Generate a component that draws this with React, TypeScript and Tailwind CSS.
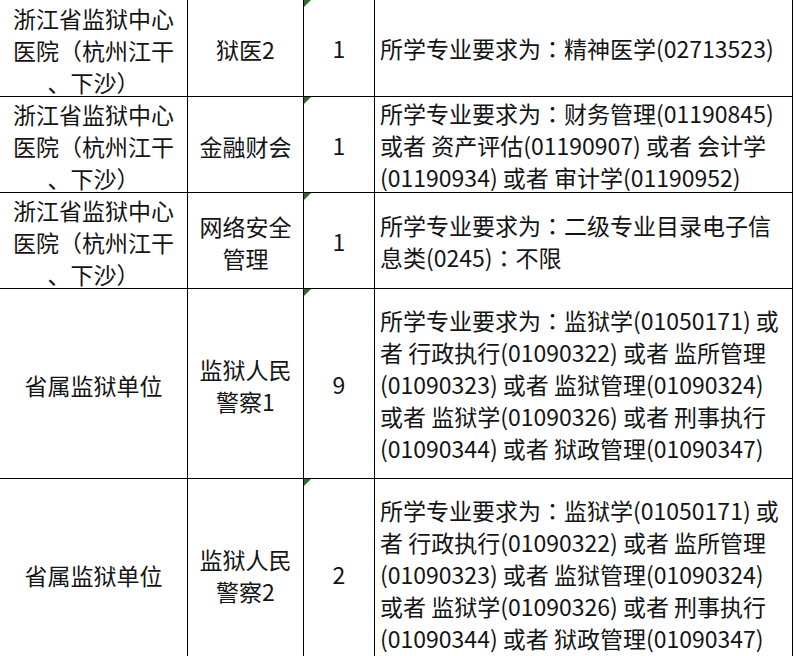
import React from "react";

type Row = {
  unit: string[];
  post: string[];
  count: string;
  major: string[];
  h: string;
};

const rows: Row[] = [
  {
    unit: ["浙江省监狱中心", "医院（杭州江干", "、下沙）"],
    post: ["狱医2"],
    count: "1",
    major: ["所学专业要求为：精神医学(02713523)"],
    h: "h-[97px]",
  },
  {
    unit: ["浙江省监狱中心", "医院（杭州江干", "、下沙）"],
    post: ["金融财会"],
    count: "1",
    major: [
      "所学专业要求为：财务管理(01190845)",
      "或者 资产评估(01190907) 或者 会计学",
      "(01190934) 或者 审计学(01190952)",
    ],
    h: "h-[96px]",
  },
  {
    unit: ["浙江省监狱中心", "医院（杭州江干", "、下沙）"],
    post: ["网络安全", "管理"],
    count: "1",
    major: ["所学专业要求为：二级专业目录电子信", "息类(0245)：不限"],
    h: "h-[96px]",
  },
  {
    unit: ["省属监狱单位"],
    post: ["监狱人民", "警察1"],
    count: "9",
    major: [
      "所学专业要求为：监狱学(01050171) 或",
      "者 行政执行(01090322) 或者 监所管理",
      "(01090323) 或者 监狱管理(01090324)",
      "或者 监狱学(01090326) 或者 刑事执行",
      "(01090344) 或者 狱政管理(01090347)",
    ],
    h: "h-[190px]",
  },
  {
    unit: ["省属监狱单位"],
    post: ["监狱人民", "警察2"],
    count: "2",
    major: [
      "所学专业要求为：监狱学(01050171) 或",
      "者 行政执行(01090322) 或者 监所管理",
      "(01090323) 或者 监狱管理(01090324)",
      "或者 监狱学(01090326) 或者 刑事执行",
      "(01090344) 或者 狱政管理(01090347)",
    ],
    h: "h-[190px]",
  },
];

// full-width punctuation drawn centred, as the original table font does
function Text({ value }: { value: string }) {
  const parts = value.split(/([：（）])/);
  return (
    <>
      {parts.map((p, i) =>
        p === "：" || p === "（" || p === "）" ? (
          <span key={i} style={{ fontFamily: '"Noto Sans CJK TC", sans-serif' }}>
            {p}
          </span>
        ) : (
          <React.Fragment key={i}>{p}</React.Fragment>
        )
      )}
    </>
  );
}

function Lines({ items }: { items: string[] }) {
  return (
    <div>
      {items.map((t, i) => (
        <div key={i} className="whitespace-pre">
          <Text value={t} />
        </div>
      ))}
    </div>
  );
}

export default function App() {
  return (
    <div
      className="w-[796px] h-[656px] overflow-hidden bg-white text-[#141414] text-[23px] leading-[32px]"
      style={{ fontFamily: '"Noto Sans CJK SC", "Noto Sans", sans-serif' }}
    >
      <div className="w-[793px] grid grid-cols-[188px_116px_71px_418px] border-r border-black">
        {rows.map((r, i) => (
          <React.Fragment key={i}>
            <div className={`${r.h} border-r border-b border-black flex items-center justify-center text-center pt-[3px]`}>
              <Lines items={r.unit} />
            </div>
            <div className={`${r.h} border-r border-b border-black flex items-center justify-center text-center pt-[2px]`}>
              <Lines items={r.post} />
            </div>
            <div className={`${r.h} relative border-r border-b border-black flex items-center justify-center`}>
              <span className="absolute left-0 top-0 w-0 h-0 border-t-[7px] border-r-[7px] border-t-[#2f6a2f] border-r-transparent" />
              {r.count}
            </div>
            <div className={`${r.h} border-b border-black flex items-center pl-[5px]`}>
              <Lines items={r.major} />
            </div>
          </React.Fragment>
        ))}
      </div>
    </div>
  );
}
